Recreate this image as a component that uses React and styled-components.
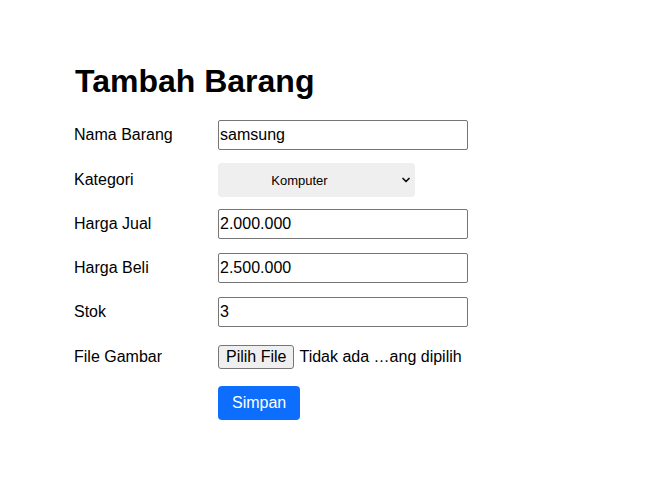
import React from "react";
import styled, { createGlobalStyle } from "styled-components";
import { ChevronDown } from "lucide-react";

const GlobalStyle = createGlobalStyle`
  body {
    margin: 0;
    background: #fff;
    font-family: "Liberation Sans", Arial, sans-serif;
    color: #000;
  }
`;

const Page = styled.div`
  padding: 63px 74px 40px;
`;

const Title = styled.h1`
  margin: 0 0 20px 1px;
  font-size: 32px;
  font-weight: bold;
  line-height: 37px;
`;

const Row = styled.div`
  display: flex;
  align-items: center;
  margin-bottom: ${(p) => p.$space ?? 14}px;
`;

const Label = styled.label`
  width: 144px;
  flex-shrink: 0;
  font-size: 16px;
`;

const Input = styled.input`
  box-sizing: border-box;
  width: 250px;
  height: 30px;
  padding: 0 1px;
  border: 1px solid #767676;
  border-radius: 2px;
  font-family: "Liberation Sans", Arial, sans-serif;
  font-size: 16px;
  color: #000;
  outline: none;
`;

const SelectWrap = styled.div`
  position: relative;
  width: 197px;
  height: 34px;
`;

const Select = styled.select`
  appearance: none;
  box-sizing: border-box;
  width: 100%;
  height: 100%;
  border: none;
  border-radius: 4px;
  background: #efefef;
  padding: 0 34px 0 0;
  text-align: center;
  font-family: "Liberation Sans", Arial, sans-serif;
  font-size: 13px;
  color: #000;
`;

const Arrow = styled(ChevronDown)`
  position: absolute;
  right: 3px;
  top: 11px;
  pointer-events: none;
`;

const FileBox = styled.div`
  display: flex;
  align-items: center;
  gap: 5px;
  font-size: 16px;
`;

const FileButton = styled.button`
  box-sizing: border-box;
  height: 24px;
  padding: 0 7px;
  border: 1px solid #767676;
  border-radius: 3px;
  background: #efefef;
  font-family: "Liberation Sans", Arial, sans-serif;
  font-size: 16px;
  color: #000;
`;

const Submit = styled.button`
  box-sizing: border-box;
  margin-left: 144px;
  height: 34px;
  padding: 0 14px;
  border: none;
  border-radius: 4px;
  background: #0d6efd;
  color: #fff;
  font-family: "Liberation Sans", Arial, sans-serif;
  font-size: 16px;
`;

export default function App() {
  return (
    <>
      <GlobalStyle />
      <Page>
        <Title>Tambah Barang</Title>
        <form onSubmit={(e) => e.preventDefault()}>
          <Row $space={13}>
            <Label>Nama Barang</Label>
            <Input defaultValue="samsung" />
          </Row>
          <Row $space={12}>
            <Label>Kategori</Label>
            <SelectWrap>
              <Select defaultValue="Komputer">
                <option>Komputer</option>
                <option>Handphone</option>
                <option>Elektronik</option>
              </Select>
              <Arrow size={12} strokeWidth={3.5} color="#111" />
            </SelectWrap>
          </Row>
          <Row>
            <Label>Harga Jual</Label>
            <Input defaultValue="2.000.000" />
          </Row>
          <Row>
            <Label>Harga Beli</Label>
            <Input defaultValue="2.500.000" />
          </Row>
          <Row $space={18}>
            <Label>Stok</Label>
            <Input defaultValue="3" />
          </Row>
          <Row $space={17}>
            <Label>File Gambar</Label>
            <FileBox>
              <FileButton type="button">Pilih File</FileButton>
              <span>Tidak ada …ang dipilih</span>
            </FileBox>
          </Row>
          <Submit type="submit">Simpan</Submit>
        </form>
      </Page>
    </>
  );
}
